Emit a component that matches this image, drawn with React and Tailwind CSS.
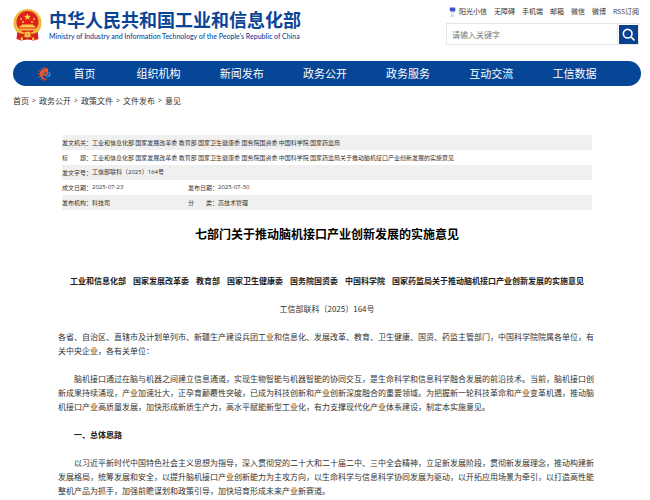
import React from "react";

const quickLinks = ["无障碍", "手机端", "邮箱", "微信", "微博", "RSS订阅"];
const navItems = ["组织机构", "新闻发布", "政务公开", "政务服务", "互动交流", "工信数据"];
const crumbs = ["首页", "政务公开", "政策文件", "文件发布", "意见"];
const issuers = [
  "工业和信息化部",
  "国家发展改革委",
  "教育部",
  "国家卫生健康委",
  "国务院国资委",
  "中国科学院",
];

function Emblem() {
  return (
    <svg viewBox="0 0 58 64" className="h-8 w-[29px] shrink-0" aria-hidden="true">
      <path d="M9 42 L7 60 L16 63 L29 61 L42 63 L51 60 L49 42 Z" fill="#d8231f" />
      <circle cx="29" cy="28" r="28" fill="#f3c24b" />
      <circle cx="29" cy="28" r="26" fill="none" stroke="#e8a436" strokeWidth="1.5" />
      <circle cx="29" cy="26" r="22" fill="#e0201b" />
      <path d="M29 9l1.9 4.4 4.8.4-3.6 3.2 1.1 4.7-4.2-2.5-4.2 2.5 1.1-4.7-3.6-3.2 4.8-.4z" fill="#fbd74a" />
      <circle cx="16" cy="20" r="1.8" fill="#fbd74a" />
      <circle cx="20" cy="26" r="1.8" fill="#fbd74a" />
      <circle cx="38" cy="26" r="1.8" fill="#fbd74a" />
      <circle cx="42" cy="20" r="1.8" fill="#fbd74a" />
      <path d="M13 37h32v-3h-3l-2-3H18l-2 3h-3z" fill="#f6cc4a" />
      <path d="M11 39h36l-4 4H15z" fill="#f3b93f" />
      <path d="M8 46c7 4 13 4 17 2h8c4 2 10 2 17-2l-1 7c-6 3-11 2-15 0H24c-4 2-9 3-15 0z" fill="#d8231f" />
      <circle cx="29" cy="51" r="6" fill="#f3c24b" />
      <circle cx="29" cy="51" r="2.5" fill="#e8a436" />
      <path d="M16 56l4 2v5l-5-1z M42 56l-4 2v5l5-1z" fill="#f3c24b" />
    </svg>
  );
}

function Swirl() {
  return (
    <svg viewBox="0 0 28 28" className="h-[14px] w-[14px]" aria-hidden="true">
      <path d="M20 3C9 1 2 8 4 17c2 8 10 11 17 6-7 2-12-1-12-7 0-5 5-9 11-7z" fill="#ee5526" />
      <path
        d="M14 3l-2-3M9 5L6 2M5 9L1 7M4 14H0M5 19l-4 2M9 23l-3 3M14 25l-1 3"
        stroke="#e8502a"
        strokeWidth="2"
      />
      <path d="M15 18c5 1 8-3 7-9 5 3 4 9 0 11-3 1-6 1-7-2z" fill="#2b86d6" />
      <path d="M10 16c0-5 5-8 10-6-1 4-5 7-10 6z" fill="none" stroke="#f0602e" strokeWidth="2.5" />
    </svg>
  );
}

function Mascot() {
  return (
    <svg viewBox="0 0 14 24" className="h-3 w-[7px]" aria-hidden="true">
      <path d="M2 3h10l1 5-2 4H4L1 8z" fill="#3557d8" />
      <path d="M4 11h7l-1 4H5z" fill="#f4e3b0" />
      <path d="M4 15h6l1 7H3z" fill="#cfe0f5" />
    </svg>
  );
}

function Row({ shaded, children }) {
  return <tr className={shaded ? "h-[15px] bg-[#f0f0f0]" : "h-[15px]"}>{children}</tr>;
}

function Label({ children }) {
  return (
    <th scope="row" className="p-0 text-left font-normal whitespace-pre">
      {children}
    </th>
  );
}

export default function App() {
  return (
    <div className="bg-white pr-[9px] pl-[13px] font-['Open_Sans','Noto_Sans_CJK_SC',sans-serif] text-[#333]">
      <header className="flex justify-between pt-[9px]">
        <div className="flex gap-[7px]">
          <Emblem />
          <div className="text-[#0a4595]">
            <h1 className="text-[18px] leading-[23px] font-bold whitespace-nowrap">中华人民共和国工业和信息化部</h1>
            <p className="font-[Lato,sans-serif] text-[7px] leading-[8px] font-medium whitespace-nowrap">
              Ministry of Industry and Information Technology of the People's Republic of China
            </p>
          </div>
        </div>
        <div className="w-[195px] pr-[2px]">
          <nav className="flex h-[6px] items-center justify-between pl-[3px] text-[7px] whitespace-nowrap">
            <a href="#sunshine" className="flex items-center gap-[3px]">
              <Mascot />
              阳光小信
            </a>
            {quickLinks.map((t) => (
              <a key={t} href="#link">
                {t}
              </a>
            ))}
          </nav>
          <form className="mt-2 flex h-[22px] items-center border border-[#e6e6e6]" onSubmit={(e) => e.preventDefault()}>
            <input
              type="search"
              aria-label="请输入关键字"
              placeholder="请输入关键字"
              className="h-full min-w-0 flex-1 border-r border-[#e6e6e6] px-[5px] text-[8px] outline-none placeholder:text-[#777]"
            />
            <button
              type="submit"
              aria-label="搜索"
              className="ml-px flex h-[19px] w-[19px] items-center justify-center bg-[#07418f]"
            >
              <svg viewBox="0 0 24 24" className="h-[13px] w-[13px]" fill="none" stroke="#fff" strokeWidth="3">
                <circle cx="10.5" cy="10.5" r="8" />
                <path d="M16.5 16.5L23 23" />
              </svg>
            </button>
          </form>
        </div>
      </header>

      <nav className="mt-4 flex h-[25px] items-center rounded-full bg-[#054696] pt-px pr-[25px] pl-[25px] text-[11px] text-white">
        <Swirl />
        <a href="#home" className="w-[65px] text-center">
          首页
        </a>
        {navItems.map((t) => (
          <a key={t} href="#section" className="flex-1 text-center">
            {t}
          </a>
        ))}
      </nav>

      <nav className="mt-[9px] flex h-3 items-center gap-[3px] text-[8px]">
        {crumbs.map((t, i) => (
          <React.Fragment key={t}>
            {i > 0 && <span className="text-[7px]">&gt;</span>}
            <a href="#crumb">{t}</a>
          </React.Fragment>
        ))}
      </nav>

      <main>
        <div className="mx-[49px] mt-7">
          <table className="w-full table-fixed border-collapse font-['Noto_Sans_CJK_SC',sans-serif] text-[6px] leading-[9px]">
            <colgroup>
              <col className="w-[30px]" />
              <col className="w-[96px]" />
              <col className="w-[30px]" />
              <col />
            </colgroup>
            <tbody>
              <Row shaded>
                <Label>发文机关：</Label>
                <td colSpan={3} className="p-0">
                  {issuers.join(" ")} 国家药监局
                </td>
              </Row>
              <Row>
                <Label>标　　题：</Label>
                <td colSpan={3} className="p-0">
                  {issuers.join(" ")} 国家药监局关于推动脑机接口产业创新发展的实施意见
                </td>
              </Row>
              <Row shaded>
                <Label>发文字号：</Label>
                <td colSpan={3} className="p-0 font-['Open_Sans','Noto_Sans_CJK_SC',sans-serif]">
                  工信部联科〔2025〕164号
                </td>
              </Row>
              <Row>
                <Label>成文日期：</Label>
                <td className="p-0 font-['Open_Sans','Noto_Sans_CJK_SC',sans-serif]">2025-07-23</td>
                <Label>发布日期：</Label>
                <td className="p-0 font-['Open_Sans','Noto_Sans_CJK_SC',sans-serif]">2025-07-30</td>
              </Row>
              <Row shaded>
                <Label>发布机构：</Label>
                <td className="p-0">科技司</td>
                <Label>分　　类：</Label>
                <td className="p-0">高技术管理</td>
              </Row>
            </tbody>
          </table>
        </div>

        <article className="mx-[45px] font-['Noto_Sans_CJK_SC',sans-serif] text-[8px] leading-[14px]">
          <h2 className="mt-4 text-center text-[12px] leading-4 font-bold text-black">
            七部门关于推动脑机接口产业创新发展的实施意见
          </h2>
          <h3 className="mt-8 flex justify-center gap-[7px] font-bold whitespace-nowrap text-[#222]">
            {issuers.map((t) => (
              <span key={t}>{t}</span>
            ))}
            <span>国家药监局关于推动脑机接口产业创新发展的实施意见</span>
          </h3>
          <p className="mt-[14px] text-center">工信部联科〔2025〕164号</p>
          <p className="mt-[14px]">
            各省、自治区、直辖市及计划单列市、新疆生产建设兵团工业和信息化、发展改革、教育、卫生健康、国资、药监主管部门，中国科学院院属各单位，有关中央企业，各有关单位：
          </p>
          <p className="mt-[14px] indent-4">
            脑机接口通过在脑与机器之间建立信息通道，实现生物智能与机器智能的协同交互，是生命科学和信息科学融合发展的前沿技术。当前，脑机接口创新成果持续涌现，产业加速壮大，正孕育颠覆性突破，已成为科技创新和产业创新深度融合的重要领域。为把握新一轮科技革命和产业变革机遇，推动脑机接口产业高质量发展，加快形成新质生产力，高水平赋能新型工业化，有力支撑现代化产业体系建设，制定本实施意见。
          </p>
          <h3 className="mt-[14px] indent-4 font-bold text-[#222]">一、总体思路</h3>
          <p className="mt-[14px] indent-4">
            以习近平新时代中国特色社会主义思想为指导，深入贯彻党的二十大和二十届二中、三中全会精神，立足新发展阶段，贯彻新发展理念，推动构建新发展格局，统筹发展和安全，以提升脑机接口产业创新能力为主攻方向，以生命科学与信息科学协同发展为驱动，以开拓应用场景为牵引，以打造高性能整机产品为抓手，加强前瞻谋划和政策引导，加快培育形成未来产业新赛道。
          </p>
        </article>
      </main>
    </div>
  );
}
